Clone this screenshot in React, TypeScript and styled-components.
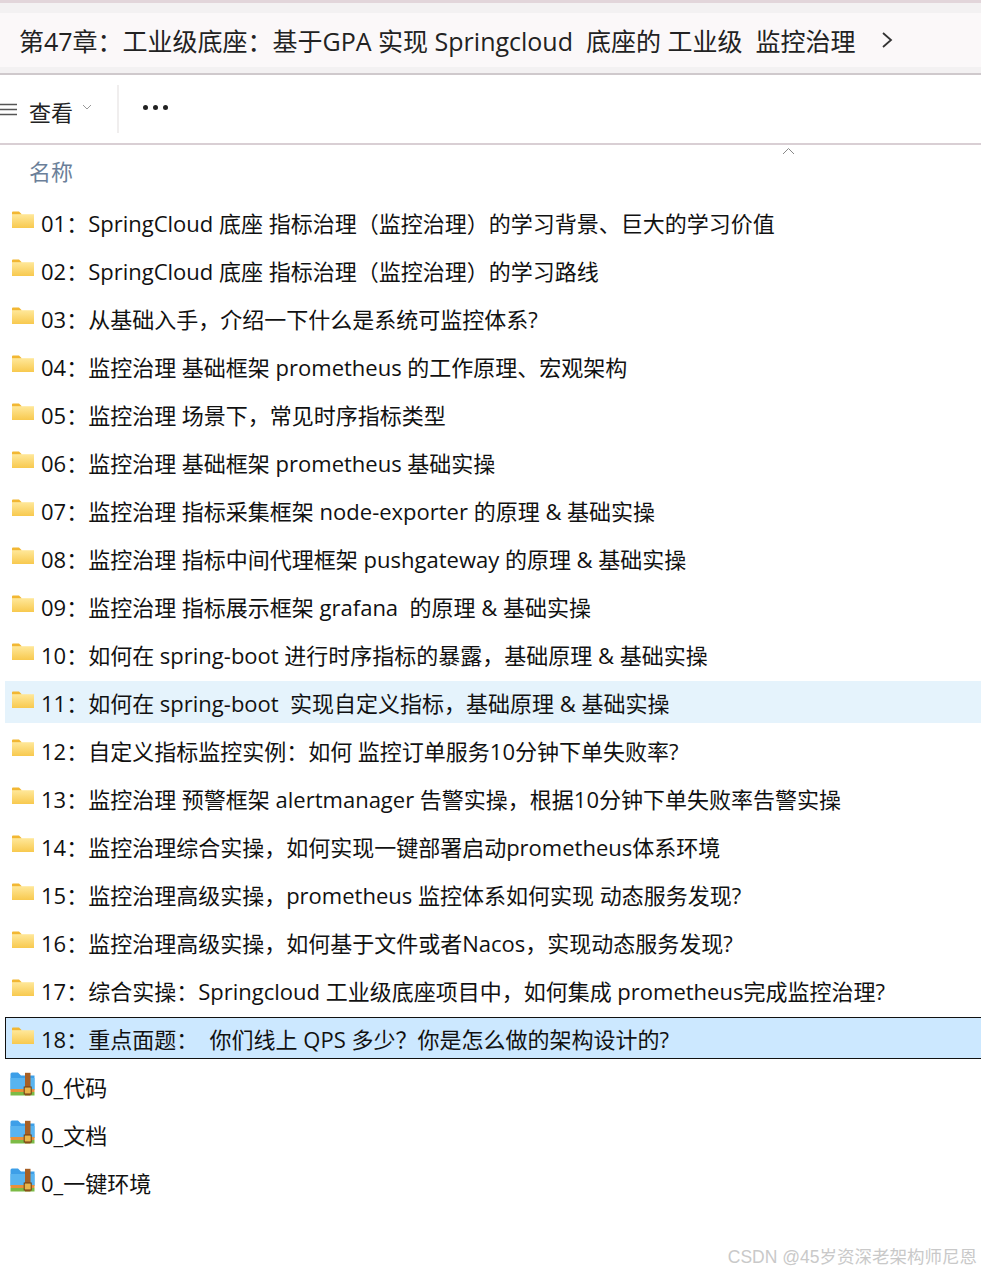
import React from "react";
import styled, { createGlobalStyle } from "styled-components";

const Global = createGlobalStyle`
  html, body { margin: 0; padding: 0; background: #fff; }
  body { font-family: "Open Sans", "Noto Sans CJK SC", sans-serif; color: #1a1a1a; }
`;

const Page = styled.div`
  position: relative;
  width: 981px;
  height: 1273px;
  overflow: hidden;
  background: #fff;
`;

const TopStrip = styled.div`
  height: 3px;
  background: #e2d5da;
`;

const AddressBand = styled.div`
  height: 72px;
  box-sizing: border-box;
  background: #f3f1f2;
  padding: 10px 0 8px;
  border-bottom: 2px solid #cfc9cc;
`;

const AddressBar = styled.div`
  height: 54px;
  background: #fbf8f9;
  display: flex;
  align-items: center;
  padding-left: 19px;
  gap: 26px;
`;

const Crumb = styled.span`
  font-size: 25px;
  white-space: pre;
  color: #222;
  letter-spacing: 0;
`;

const Toolbar = styled.div`
  height: 68px;
  box-sizing: content-box;
  border-bottom: 2px solid #d9cfd4;
  display: flex;
  align-items: center;
  padding-right: 0;
  position: relative;
`;

const ViewButton = styled.div`
  display: flex;
  align-items: center;
  width: 119px;
  height: 48px;
  border-right: 2px solid #f0eeee;
  box-sizing: border-box;
`;

const ViewLabel = styled.span`
  font-size: 22px;
  margin-left: 12px;
  color: #222;
  position: relative;
  top: 2px;
`;

const Chev = styled.svg`
  margin-left: 9px;
  margin-top: -4px;
`;

const More = styled.div`
  display: flex;
  gap: 5px;
  margin-left: 24px;
  margin-top: -3px;
`;

const Dot = styled.i`
  width: 5px;
  height: 5px;
  border-radius: 50%;
  background: #222;
`;

const SortCaret = styled.svg`
  position: absolute;
  left: 782px;
  top: 147px;
`;

const Header = styled.div`
  height: 54px;
  padding-left: 29px;
  font-size: 22px;
  color: #6b7f99;
  display: flex;
  align-items: center;
  margin-top: -1px;
  box-sizing: border-box;
  padding-bottom: 3px;
`;

const List = styled.div`
  display: flex;
  flex-direction: column;
`;

const Row = styled.div<{ $state?: "hover" | "selected" }>`
  height: 48px;
  display: flex;
  align-items: center;
  position: relative;
  padding-left: 11px;
  &::before {
    content: "";
    position: absolute;
    left: 5px;
    right: 0;
    top: 3px;
    height: 42px;
    box-sizing: border-box;
    background: ${(p) => (p.$state === "hover" ? "#e5f3fc" : p.$state === "selected" ? "#cce8ff" : "transparent")};
    border: ${(p) => (p.$state === "selected" ? "1px solid #111" : "none")};
    border-right: none;
  }
`;

const RowIcon = styled.svg`
  position: relative;
  flex: none;
  margin-top: -5px;
`;

const RowText = styled.span`
  position: relative;
  font-size: 22px;
  margin-left: 6px;
  white-space: pre;
  color: #111;
`;

const Watermark = styled.div`
  position: absolute;
  right: 4px;
  bottom: 5px;
  font-size: 17.5px;
  color: #c9c9c9;
  white-space: pre;
  font-family: "Liberation Sans", "Noto Sans CJK SC", sans-serif;
`;

const Folder = () => (
  <RowIcon width="24" height="18" viewBox="0 0 24 18">
    <defs>
      <linearGradient id="fg" x1="0" y1="0" x2="0" y2="1">
        <stop offset="0" stopColor="#ffe89a" />
        <stop offset="1" stopColor="#f8c94e" />
      </linearGradient>
    </defs>
    <path d="M1 1.5 A1 1 0 0 1 2 .5 H8 L10.5 3 V5 H1 Z" fill="#f2b733" />
    <path d="M1 3.2 H23 V17 H1 Z" fill="url(#fg)" />
  </RowIcon>
);

const Archive = () => (
  <RowIcon width="25" height="24" viewBox="0 0 25 24" style={{ marginTop: -4, marginLeft: -1 }}>
    <path d="M0.5 2 A1.5 1.5 0 0 1 2 .5 H8 L11 3.5 H24.5 V18 H0.5 Z" fill="#3d9fe8" />
    <path d="M.5 6 H24.5 V17 H.5 Z" fill="#58b4f0" />
    <rect x=".5" y="17" width="24" height="3" fill="#e8913a" />
    <rect x=".5" y="20" width="24" height="3.5" fill="#7cbb46" />
    <rect x="15" y=".8" width="5.5" height="22.7" fill="#a65f24" />
    <rect x="14.2" y="15" width="7" height="7" fill="#e8b54c" stroke="#6e3d12" strokeWidth="1" />
  </RowIcon>
);

const rows: { t: string; s?: "hover" | "selected" }[] = [
  { t: "01：SpringCloud 底座 指标治理（监控治理）的学习背景、巨大的学习价值" },
  { t: "02：SpringCloud 底座 指标治理（监控治理）的学习路线" },
  { t: "03：从基础入手，介绍一下什么是系统可监控体系?" },
  { t: "04：监控治理 基础框架 prometheus 的工作原理、宏观架构" },
  { t: "05：监控治理 场景下，常见时序指标类型" },
  { t: "06：监控治理 基础框架 prometheus 基础实操" },
  { t: "07：监控治理 指标采集框架 node-exporter 的原理 & 基础实操" },
  { t: "08：监控治理 指标中间代理框架 pushgateway 的原理 & 基础实操" },
  { t: "09：监控治理 指标展示框架 grafana  的原理 & 基础实操" },
  { t: "10：如何在 spring-boot 进行时序指标的暴露，基础原理 & 基础实操" },
  { t: "11：如何在 spring-boot  实现自定义指标，基础原理 & 基础实操", s: "hover" },
  { t: "12：自定义指标监控实例：如何 监控订单服务10分钟下单失败率?" },
  { t: "13：监控治理 预警框架 alertmanager 告警实操，根据10分钟下单失败率告警实操" },
  { t: "14：监控治理综合实操，如何实现一键部署启动prometheus体系环境" },
  { t: "15：监控治理高级实操，prometheus 监控体系如何实现 动态服务发现?" },
  { t: "16：监控治理高级实操，如何基于文件或者Nacos，实现动态服务发现?" },
  { t: "17：综合实操：Springcloud 工业级底座项目中，如何集成 prometheus完成监控治理?" },
  { t: "18：重点面题：  你们线上 QPS 多少？你是怎么做的架构设计的?", s: "selected" },
];

const archives = ["0_代码", "0_文档", "0_一键环境"];

export default function App() {
  return (
    <Page>
      <Global />
      <TopStrip />
      <AddressBand>
        <AddressBar>
          <Crumb>第47章：工业级底座：基于GPA 实现 Springcloud  底座的 工业级  监控治理</Crumb>
          <svg width="12" height="18" viewBox="0 0 12 18">
            <path d="M2 2 L10 9 L2 16" fill="none" stroke="#333" strokeWidth="1.8" />
          </svg>
        </AddressBar>
      </AddressBand>
      <Toolbar>
        <ViewButton>
          <svg width="17" height="13" viewBox="0 0 17 13" style={{ flex: "none" }}>
            <path d="M0 1.5 H17 M0 6.5 H17 M0 11.5 H17" stroke="#555" strokeWidth="1.3" />
          </svg>
          <ViewLabel>查看</ViewLabel>
          <Chev width="10" height="7" viewBox="0 0 10 7">
            <path d="M1 1 L5 5 L9 1" fill="none" stroke="#999" strokeWidth="1" />
          </Chev>
        </ViewButton>
        <More>
          <Dot />
          <Dot />
          <Dot />
        </More>
      </Toolbar>
      <SortCaret width="13" height="8" viewBox="0 0 13 8">
        <path d="M1 7 L6.5 1.5 L12 7" fill="none" stroke="#888" strokeWidth="1" />
      </SortCaret>
      <Header>名称</Header>
      <List>
        {rows.map((r) => (
          <Row key={r.t} $state={r.s}>
            <Folder />
            <RowText>{r.t}</RowText>
          </Row>
        ))}
        {archives.map((a) => (
          <Row key={a}>
            <Archive />
            <RowText>{a}</RowText>
          </Row>
        ))}
      </List>
      <Watermark>CSDN @45岁资深老架构师尼恩</Watermark>
    </Page>
  );
}
